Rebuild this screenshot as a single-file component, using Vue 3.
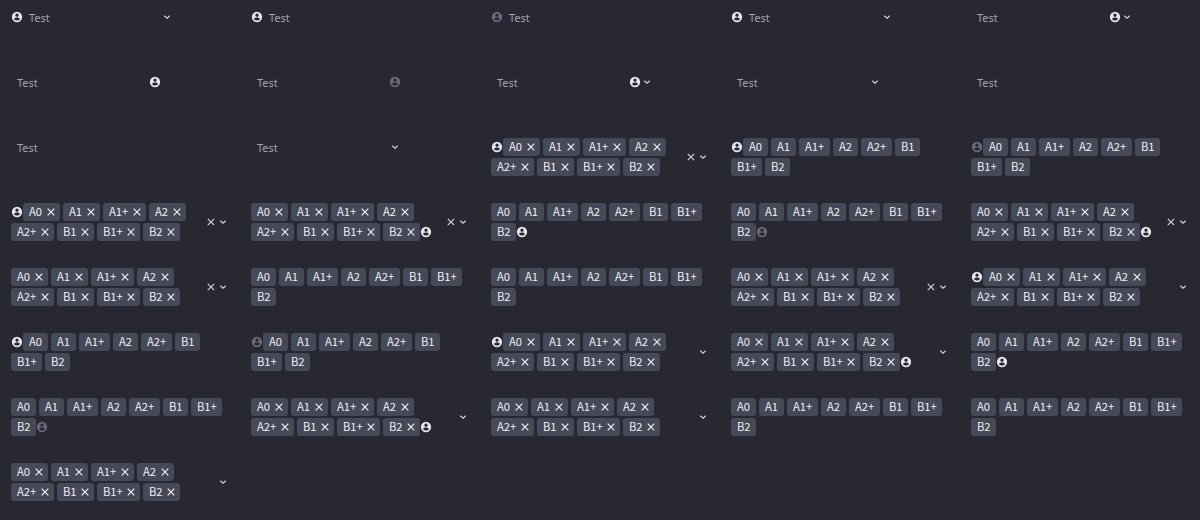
<script setup>
const names = ['A0', 'A1', 'A1+', 'A2', 'A2+', 'B1', 'B1+', 'B2']

// p: prefix icon, s: suffix icon ('on' | 'dim'); arrow, clear, close: controls
const field = (p, s, arrow) => ({ p, s, arrow })
const tags = (p, s, close, clear) => {
  const split = close ? 4 : p ? 6 : 7
  return { p, s, close, clear, arrow: close, lines: [names.slice(0, split), names.slice(split)] }
}

const cells = [
  field('on', '', true), field('on', '', false), field('dim', '', false), field('on', '', true), field('', 'on', true),
  field('', 'on', false), field('', 'dim', false), field('', 'on', true), field('', '', true), field('', '', false),
  field('', '', false), field('', '', true), tags('on', '', true, true), tags('on', ''), tags('dim', ''),
  tags('on', '', true, true), tags('', 'on', true, true), tags('', 'on'), tags('', 'dim'), tags('', 'on', true, true),
  tags('', '', true, true), tags('', ''), tags('', ''), tags('', '', true, true), tags('on', '', true, false),
  tags('on', ''), tags('dim', ''), tags('on', '', true, false), tags('', 'on', true, false), tags('', 'on'),
  tags('', 'dim'), tags('', 'on', true, false), tags('', '', true, false), tags('', ''), tags('', ''),
  tags('', '', true, false),
]
const userPath = 'M12 1.700a10.300 10.300 0 1 0 0 20.600 10.300 10.300 0 0 0 0-20.600ZM12 5a3.300 3.300 0 1 1 0 6.600A3.300 3.300 0 0 1 12 5Zm0 14.200a7.200 7.200 0 0 1-6-3.220c.030-1.990 4-3.080 6-3.080 1.990 0 5.970 1.090 6 3.080a7.200 7.200 0 0 1-6 3.220Z'
</script>

<template>
  <main class="board">
    <section v-for="(c, i) in cells" :key="i" class="cell">
      <template v-if="!c.lines">
        <svg v-if="c.p" class="icon user" :class="c.p" viewBox="0 0 24 24"><path :d="userPath" /></svg>
        <span class="placeholder">Test</span>
        <svg v-if="c.s" class="icon user" :class="c.s" viewBox="0 0 24 24"><path :d="userPath" /></svg>
        <svg v-if="c.arrow" class="icon arrow" viewBox="0 0 12 12"><path d="M3.300 4.800 6 7.300 8.700 4.800" /></svg>
      </template>
      <template v-else>
        <div class="tags">
          <div v-for="(line, n) in c.lines" :key="n" class="line">
            <svg v-if="c.p && n === 0" class="icon user" :class="c.p" viewBox="0 0 24 24"><path :d="userPath" /></svg>
            <div class="group">
              <span v-for="t in line" :key="t" class="tag"><span class="label" :class="{ wide: t.length > 2 }">{{ t }}</span><svg v-if="c.close" class="close" viewBox="0 0 12 12"><path d="m2.700 2.700 6.600 6.600m0-6.600-6.600 6.600" /></svg></span>
            </div>
            <svg v-if="c.s && n === 1" class="icon user" :class="c.s" viewBox="0 0 24 24"><path :d="userPath" /></svg>
          </div>
        </div>
        <svg v-if="c.clear" class="icon clear" viewBox="0 0 12 12"><path d="m2.800 2.800 6.400 6.400m0-6.400-6.400 6.400" /></svg>
        <svg v-if="c.arrow" class="icon arrow" viewBox="0 0 12 12"><path d="M3.300 4.800 6 7.300 8.700 4.800" /></svg>
      </template>
    </section>
  </main>
</template>

<style>
body { background: #282833; }
</style>
<style scoped>
.board {
  display: grid;
  grid-template-columns: repeat(5, 240px);
  grid-auto-rows: 65px;
  height: 520px;
  overflow: hidden;
  background: #282833;
  font-family: "Noto Sans CJK SC", "Noto Sans", sans-serif;
  font-size: 11.2px;
  line-height: 18px;
}
.cell {
  display: flex;
  align-items: center;
  align-self: start;
  padding: 8px 11px 0;
}
.placeholder {
  box-sizing: border-box;
  width: 138px;
  height: 18px;
  padding-left: 6px;
  color: #a3a3b0;
  font-family: "Noto Sans", sans-serif;
  font-size: 11px;
  line-height: 20px;
}
.icon { width: 12px; height: 12px; flex: none; }
.user { fill: #e6e6f0; }
.user.dim { fill: #6a6a78; }
.arrow, .clear { fill: none; stroke: #d0d0da; stroke-width: 1.2; }
.tags { display: flex; flex: 1; min-width: 0; flex-direction: column; gap: 2px; }
.line { display: flex; align-items: center; height: 18px; }
.group { display: flex; gap: 3px; }
.tag {
  display: flex;
  align-items: center;
  height: 18px;
  padding: 0 6px;
  border-radius: 3px;
  background: #464957;
  color: #f0f0f5;
  white-space: nowrap;
}
.label { width: 13px; line-height: 16px; height: 18px; }
.label.wide { width: 19px; }
.close { width: 12px; height: 12px; margin: 0 -3px 0 3px; fill: none; stroke: #f0f0f5; stroke-width: 1.2; }
</style>
